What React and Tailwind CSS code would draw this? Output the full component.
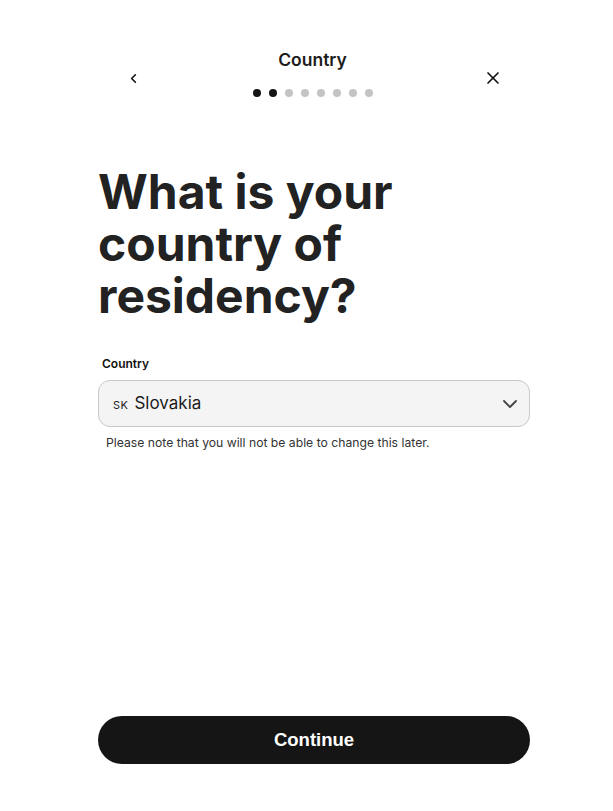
import React from 'react';
import {ChevronDown, ChevronLeft, X} from 'lucide-react';

export default function App() {
    const steps = 8;
    const current = 2;

    return (
        <div className="min-h-screen bg-white flex flex-col font-['Inter',sans-serif] text-[#222]">
            <div className="w-[432px] ml-[98px] flex flex-col flex-1 pb-[47px]">
                {/* Header */}
                <div className="flex items-start justify-between pt-[49px] px-[28px]">
                    <button className="mt-[22px] w-[14px] h-[14px] flex items-center justify-center text-[#111]">
                        <ChevronLeft size={15} strokeWidth={2.6} className="shrink-0"/>
                    </button>
                    <div className="flex flex-col items-center">
                        <div className="text-[17.5px] font-semibold leading-[22px] text-[#1c1c1c]">Country</div>
                        <div className="flex gap-[8px] mt-[18px]">
                            {Array.from({length: steps}).map((_, i) => (
                                <span key={i}
                                    className={i < current ? 'w-[8px] h-[8px] rounded-full bg-[#151515]' : 'w-[8px] h-[8px] rounded-full bg-[#c4c4c4]'}/>
                            ))}
                        </div>
                    </div>
                    <button className="mt-[21px] mr-[1px] w-[16px] h-[16px] flex items-center justify-center text-[#111]">
                        <X size={20} strokeWidth={2} className="shrink-0"/>
                    </button>
                </div>

                {/* Title */}
                <h1 className="mt-[69px] text-[48px] font-bold leading-[52px] text-[#222]">
                    What is your<br/>country of<br/>residency?
                </h1>

                {/* Country field */}
                <label className="mt-[34px] ml-[4px] text-[12px] font-semibold leading-[16px] text-[#111]">Country</label>
                <div className="mt-[8px] h-[47px] rounded-[12px] border border-[#c8c8c8] bg-[#f4f4f4] flex items-center pl-[14px] pr-[7px]">
                    <div className="flex-1 flex items-baseline">
                        <span className="text-[11px] tracking-[0.5px] text-[#222] mr-[6px]">SK</span>
                        <span className="text-[17px] text-[#1c1c1c]">Slovakia</span>
                    </div>
                    <ChevronDown size={24} strokeWidth={1.8} className="shrink-0 text-[#444]"/>
                </div>
                <p className="mt-[8px] ml-[8px] text-[12.2px] leading-[16px] text-[#333]">
                    Please note that you will not be able to change this later.
                </p>

                <div className="flex-1"/>

                <button className="h-[48px] w-full rounded-full bg-[#151515] text-white text-[18.5px] font-bold font-['Liberation_Sans',sans-serif]">
                    Continue
                </button>
            </div>
        </div>
    );
}
